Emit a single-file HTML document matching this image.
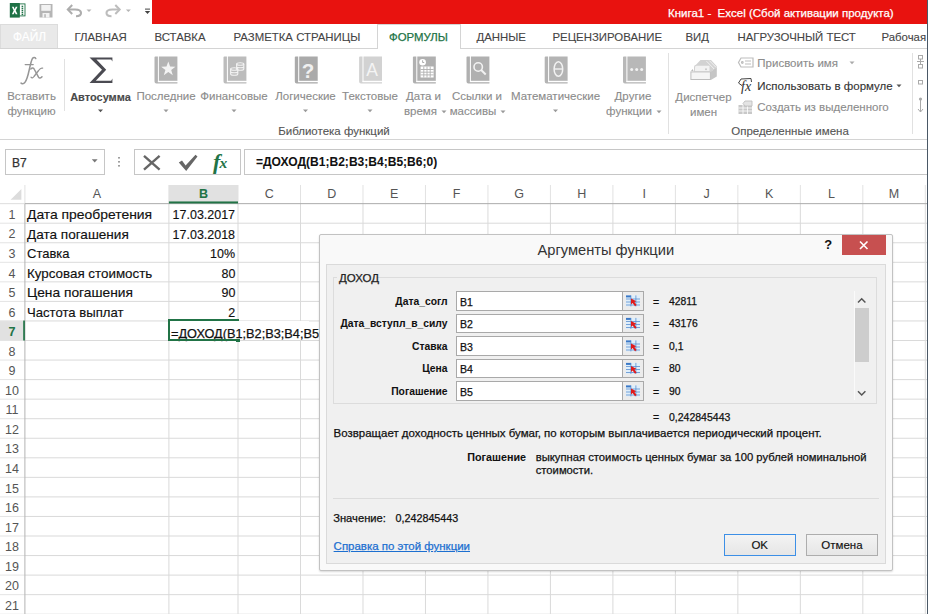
<!DOCTYPE html>
<html><head><meta charset="utf-8">
<style>
*{margin:0;padding:0;box-sizing:border-box}
html,body{width:928px;height:614px;overflow:hidden;background:#fff;font-family:"Liberation Sans",sans-serif;color:#222}
.a{position:absolute}
.t{position:absolute;white-space:nowrap;line-height:1;-webkit-text-stroke:0.25px currentColor}
svg{position:absolute;overflow:visible}
</style></head><body>
<div class="a" style="left:152px;top:0px;width:776px;height:24px;background:#e8120f"></div>
<div class="t" style="left:668px;top:7.5px;font-size:11.5px;color:#fff">Книга1 -&nbsp; Excel (Сбой активации продукта)</div>
<svg style="left:0;top:0" width="928" height="614"><rect x="19" y="3.9" width="6" height="12" fill="#fff" stroke="#1e7145" stroke-width="0.9"/><g fill="#1e7145"><rect x="21.6" y="5.7" width="1.6" height="1.4"/><rect x="21.6" y="7.7" width="1.6" height="1.4"/><rect x="21.6" y="9.7" width="1.6" height="1.4"/><rect x="21.6" y="11.7" width="1.6" height="1.4"/><rect x="21.6" y="13.7" width="1.6" height="1.4"/></g><rect x="9.8" y="3" width="10" height="14.6" fill="#1e7145"/><path d="M11.9,6.8 L13.7,6.8 L14.7,9.2 L15.7,6.8 L17.5,6.8 L15.7,10.5 L17.5,14.3 L15.7,14.3 L14.7,11.9 L13.7,14.3 L11.9,14.3 L13.7,10.5 Z" fill="#fff"/><path d="M39.5,4 L52.5,4 L52.5,17.5 L39.5,17.5 Z" fill="#b5b5b5"/><rect x="41.3" y="5" width="9.4" height="5.8" fill="#f2f2f2"/><rect x="42.5" y="13" width="7" height="4.5" fill="#f2f2f2"/><rect x="44.3" y="14.2" width="1.5" height="3.3" fill="#b5b5b5"/><path d="M72.2,5 L67.8,9.5 L72.2,14" fill="none" stroke="#adadad" stroke-width="2"/><path d="M68.5,9.5 L75,9.5 C79,9.5 81,11.3 81,13 C81,15 79,16.2 76,16.2" fill="none" stroke="#adadad" stroke-width="2.1"/><polygon points="86.5,9.5 91.5,9.5 89,12" fill="#b5b5b5"/><path d="M115.3,5 L119.7,9.5 L115.3,14" fill="none" stroke="#bdbdbd" stroke-width="2"/><path d="M119,9.5 L112.5,9.5 C108.5,9.5 106.5,11.3 106.5,13 C106.5,15 108.5,16.2 111.5,16.2" fill="none" stroke="#bdbdbd" stroke-width="2.1"/><polygon points="125.9,9.5 130.9,9.5 128.4,12" fill="#b5b5b5"/><rect x="145" y="8.6" width="5" height="1" fill="#444"/><polygon points="144.8,11 150.2,11 147.5,14" fill="#444"/></svg>
<div class="a" style="left:0px;top:48px;width:928px;height:1px;background:#d4d4d4"></div>
<div class="a" style="left:0px;top:24.3px;width:57.8px;height:24px;background:#e9e9e9;border:1px solid #dcdcdc;border-bottom:none"></div>
<div class="t" style="left:12.5px;top:29.8px;font-size:13.2px;transform:scaleX(0.9);transform-origin:0 0;color:#fff;-webkit-text-stroke:0.2px #fff">ФАЙЛ</div>
<div class="a" style="left:377px;top:24px;width:84px;height:25px;background:#fff;border:1px solid #d4d4d4;border-bottom:none"></div>
<div class="t" style="left:74.5px;top:31.5px;font-size:11.4px;color:#444;-webkit-text-stroke:0.1px #444">ГЛАВНАЯ</div>
<div class="t" style="left:154.5px;top:31.5px;font-size:11.4px;color:#444;-webkit-text-stroke:0.1px #444">ВСТАВКА</div>
<div class="t" style="left:233.5px;top:31.5px;font-size:11.4px;color:#444;-webkit-text-stroke:0.1px #444">РАЗМЕТКА СТРАНИЦЫ</div>
<div class="t" style="left:476.5px;top:31.5px;font-size:11.4px;color:#444;-webkit-text-stroke:0.1px #444">ДАННЫЕ</div>
<div class="t" style="left:552.5px;top:31.5px;font-size:11.4px;color:#444;-webkit-text-stroke:0.1px #444">РЕЦЕНЗИРОВАНИЕ</div>
<div class="t" style="left:685.5px;top:31.5px;font-size:11.4px;color:#444;-webkit-text-stroke:0.1px #444">ВИД</div>
<div class="t" style="left:737.5px;top:31.5px;font-size:11.4px;color:#444;-webkit-text-stroke:0.1px #444">НАГРУЗОЧНЫЙ ТЕСТ</div>
<div class="t" style="left:881.5px;top:31.5px;font-size:11.4px;color:#444;-webkit-text-stroke:0.1px #444">Рабочая</div>
<div class="t" style="left:389px;top:31.5px;font-size:11.4px;color:#217346">ФОРМУЛЫ</div>
<div class="a" style="left:0px;top:139px;width:928px;height:1px;background:#d4d4d4"></div>
<div class="t" style="left:-48.5px;width:160px;text-align:center;top:91.46px;font-size:11.5px;color:#8c8c8c;-webkit-text-stroke:0.12px currentColor">Вставить</div>
<div class="t" style="left:-48.5px;width:160px;text-align:center;top:106.46px;font-size:11.5px;color:#8c8c8c;-webkit-text-stroke:0.12px currentColor">функцию</div>
<div class="a" style="left:64px;top:59px;width:1px;height:52px;background:#e1e1e1"></div>
<div class="t" style="left:20.5px;width:160px;text-align:center;top:91.70px;font-size:11px;color:#4a4a4a;font-weight:bold;-webkit-text-stroke:0.05px currentColor;-webkit-text-stroke:0.12px currentColor">Автосумма</div>
<svg style="left:0;top:0" width="1" height="1"><polygon points="98.0,109.5 103.0,109.5 100.5,112.2" fill="#555"/></svg>
<div class="t" style="left:86px;width:160px;text-align:center;top:91.46px;font-size:11.5px;color:#8c8c8c;-webkit-text-stroke:0.12px currentColor">Последние</div>
<svg style="left:0;top:0" width="1" height="1"><polygon points="163.5,109.5 168.5,109.5 166,112.2" fill="#9a9a9a"/></svg>
<div class="t" style="left:154px;width:160px;text-align:center;top:91.46px;font-size:11.5px;color:#8c8c8c;-webkit-text-stroke:0.12px currentColor">Финансовые</div>
<svg style="left:0;top:0" width="1" height="1"><polygon points="231.5,109.5 236.5,109.5 234,112.2" fill="#9a9a9a"/></svg>
<div class="t" style="left:225.5px;width:160px;text-align:center;top:91.46px;font-size:11.5px;color:#8c8c8c;-webkit-text-stroke:0.12px currentColor">Логические</div>
<svg style="left:0;top:0" width="1" height="1"><polygon points="303.0,109.5 308.0,109.5 305.5,112.2" fill="#9a9a9a"/></svg>
<div class="t" style="left:290px;width:160px;text-align:center;top:91.46px;font-size:11.5px;color:#8c8c8c;-webkit-text-stroke:0.12px currentColor">Текстовые</div>
<svg style="left:0;top:0" width="1" height="1"><polygon points="367.5,109.5 372.5,109.5 370,112.2" fill="#9a9a9a"/></svg>
<div class="t" style="left:343.5px;width:160px;text-align:center;top:91.46px;font-size:11.5px;color:#8c8c8c;-webkit-text-stroke:0.12px currentColor">Дата и</div>
<div class="t" style="left:340.5px;width:160px;text-align:center;top:106.46px;font-size:11.5px;color:#8c8c8c;-webkit-text-stroke:0.12px currentColor">время</div>
<svg style="left:0;top:0" width="1" height="1"><polygon points="441.5,110.5 446.5,110.5 444,113.2" fill="#9a9a9a"/></svg>
<div class="t" style="left:397px;width:160px;text-align:center;top:91.46px;font-size:11.5px;color:#8c8c8c;-webkit-text-stroke:0.12px currentColor">Ссылки и</div>
<div class="t" style="left:393px;width:160px;text-align:center;top:106.46px;font-size:11.5px;color:#8c8c8c;-webkit-text-stroke:0.12px currentColor">массивы</div>
<svg style="left:0;top:0" width="1" height="1"><polygon points="500.5,110.5 505.5,110.5 503,113.2" fill="#9a9a9a"/></svg>
<div class="t" style="left:475.5px;width:160px;text-align:center;top:91.46px;font-size:11.5px;color:#8c8c8c;-webkit-text-stroke:0.12px currentColor">Математические</div>
<svg style="left:0;top:0" width="1" height="1"><polygon points="553.0,109.5 558.0,109.5 555.5,112.2" fill="#9a9a9a"/></svg>
<div class="t" style="left:553px;width:160px;text-align:center;top:91.46px;font-size:11.5px;color:#8c8c8c;-webkit-text-stroke:0.12px currentColor">Другие</div>
<div class="t" style="left:549px;width:160px;text-align:center;top:106.46px;font-size:11.5px;color:#8c8c8c;-webkit-text-stroke:0.12px currentColor">функции</div>
<svg style="left:0;top:0" width="1" height="1"><polygon points="656.5,110.5 661.5,110.5 659,113.2" fill="#9a9a9a"/></svg>
<div class="t" style="left:254px;width:160px;text-align:center;top:126.46px;font-size:11.5px;color:#555;-webkit-text-stroke:0.12px currentColor">Библиотека функций</div>
<div class="a" style="left:668px;top:53px;width:1px;height:81px;background:#e1e1e1"></div>
<div class="t" style="left:623.5px;width:160px;text-align:center;top:91.86px;font-size:11.5px;color:#8c8c8c;-webkit-text-stroke:0.12px currentColor">Диспетчер</div>
<div class="t" style="left:623.5px;width:160px;text-align:center;top:106.66px;font-size:11.5px;color:#8c8c8c;-webkit-text-stroke:0.12px currentColor">имен</div>
<div class="t" style="left:757.3px;top:57.66px;font-size:11.5px;color:#8c8c8c;-webkit-text-stroke:0.12px currentColor">Присвоить имя</div>
<svg style="left:0;top:0" width="1" height="1"><polygon points="849.5,61.5 854.5,61.5 852,64.2" fill="#aaa"/></svg>
<div class="t" style="left:757.3px;top:80.76px;font-size:11.5px;color:#333;-webkit-text-stroke:0.12px currentColor">Использовать в формуле</div>
<svg style="left:0;top:0" width="1" height="1"><polygon points="896.5,84.5 901.5,84.5 899,87.2" fill="#555"/></svg>
<div class="t" style="left:757.3px;top:102.46px;font-size:11.5px;color:#8c8c8c;-webkit-text-stroke:0.12px currentColor">Создать из выделенного</div>
<div class="t" style="left:710px;width:160px;text-align:center;top:126.46px;font-size:11.5px;color:#555;-webkit-text-stroke:0.12px currentColor">Определенные имена</div>
<div class="a" style="left:912px;top:53px;width:1px;height:81px;background:#e1e1e1"></div>
<svg style="left:0;top:0" width="928" height="614"><g fill="none" stroke="#969696" stroke-linecap="round"><path d="M35.8,58.6 C35.4,57.2 33.6,57 32.6,58.3 C31.5,59.8 30.5,64 29.2,70 C27.8,76.5 26.5,80.5 24.8,82.6 C23.6,84 21.8,84.2 21,83" stroke-width="1.5"/><path d="M25.2,64.6 L33.2,64.6" stroke-width="1.3"/><path d="M30.8,69 C32.2,67.5 33.6,67.8 34.4,69.5 L38.5,77.2 C39.4,78.6 40.8,78.2 42,76.8" stroke-width="1.5"/><path d="M42.6,68.2 C41.2,67.6 40,68.5 38.6,70.5 L34,76.5 C33,78 31.8,78.2 31,77.2" stroke-width="1.3"/></g><path d="M89.5,57.4 L112.4,57.4 L112.4,61.6 L111.2,59.6 L96.4,59.6 L106.2,69.8 L95.8,80.7 L111.2,80.7 L112.4,78.6 L112.4,83 L89.5,83 L102,69.8 Z" fill="#4b4b52"/><g transform="translate(154.2,56.5)"><path d="M0.3,0.8 Q0.3,0 1.2,0 L3.7,0 L3.7,25.6 L23.2,25.6 L23.2,27 L2.2,27 Q0.3,27 0.3,25 Z" fill="#b4b4b4"/><rect x="4.7" y="0" width="18.5" height="24.4" fill="#b4b4b4"/><rect x="3.7" y="24.4" width="19.5" height="1.3" fill="#fff"/><path d="M14.1,4.9 L15.9,10.1 L21.2,10.2 L17,13.5 L18.6,18.7 L14.1,15.6 L9.6,18.7 L11.2,13.5 L7,10.2 L12.3,10.1 Z" fill="#f4f4f4"/></g><g transform="translate(223.2,56.5)"><path d="M0.3,0.8 Q0.3,0 1.2,0 L3.7,0 L3.7,25.6 L23.2,25.6 L23.2,27 L2.2,27 Q0.3,27 0.3,25 Z" fill="#bcbcbc"/><rect x="4.7" y="0" width="18.5" height="24.4" fill="#bcbcbc"/><rect x="3.7" y="24.4" width="19.5" height="1.3" fill="#fff"/><g fill="none" stroke="#f2f2f2" stroke-width="1.1"><ellipse cx="17" cy="7.5" rx="3.6" ry="1.3"/><path d="M13.4,7.5 v5 a3.6,1.3 0 0 0 7.2,0 v-5 M13.4,10 a3.6,1.3 0 0 0 7.2,0"/><ellipse cx="11" cy="12.5" rx="3.6" ry="1.3"/><path d="M7.4,12.5 v5 a3.6,1.3 0 0 0 7.2,0 v-5 M7.4,15 a3.6,1.3 0 0 0 7.2,0"/></g></g><g transform="translate(294.5,56.5)"><path d="M0.3,0.8 Q0.3,0 1.2,0 L3.7,0 L3.7,25.6 L23.2,25.6 L23.2,27 L2.2,27 Q0.3,27 0.3,25 Z" fill="#aaaaaa"/><rect x="4.7" y="0" width="18.5" height="24.4" fill="#aaaaaa"/><rect x="3.7" y="24.4" width="19.5" height="1.3" fill="#fff"/><text x="13.6" y="21" text-anchor="middle" font-family="Liberation Sans" font-weight="bold" font-size="20.5" fill="#f0f0f0">?</text></g><g transform="translate(358.8,56.5)"><path d="M0.3,0.8 Q0.3,0 1.2,0 L3.7,0 L3.7,25.6 L23.2,25.6 L23.2,27 L2.2,27 Q0.3,27 0.3,25 Z" fill="#d2d2d2"/><rect x="4.7" y="0" width="18.5" height="24.4" fill="#d2d2d2"/><rect x="3.7" y="24.4" width="19.5" height="1.3" fill="#fff"/><text x="13.2" y="19.6" text-anchor="middle" font-family="Liberation Sans" font-size="17.5" fill="#f4f4f4">A</text></g><g transform="translate(412.6,56.5)"><path d="M0.3,0.8 Q0.3,0 1.2,0 L3.7,0 L3.7,25.6 L23.2,25.6 L23.2,27 L2.2,27 Q0.3,27 0.3,25 Z" fill="#b0b0b0"/><rect x="4.7" y="0" width="18.5" height="24.4" fill="#b0b0b0"/><rect x="3.7" y="24.4" width="19.5" height="1.3" fill="#fff"/><circle cx="10" cy="5.8" r="3.3" fill="#fff"/><path d="M10,3.8 v2.2 h1.6" stroke="#999" stroke-width="0.8" fill="none"/><g fill="#fff"><rect x="8" y="10" width="13" height="11"/></g><g stroke="#b0b0b0" stroke-width="0.9"><path d="M8,13 h13 M8,15.7 h13 M8,18.4 h13 M11.2,10 v11 M14.4,10 v11 M17.6,10 v11"/></g></g><g transform="translate(466.2,56.5)"><path d="M0.3,0.8 Q0.3,0 1.2,0 L3.7,0 L3.7,25.6 L23.2,25.6 L23.2,27 L2.2,27 Q0.3,27 0.3,25 Z" fill="#b0b0b0"/><rect x="4.7" y="0" width="18.5" height="24.4" fill="#b0b0b0"/><rect x="3.7" y="24.4" width="19.5" height="1.3" fill="#fff"/><circle cx="12" cy="10.5" r="4.2" fill="none" stroke="#f2f2f2" stroke-width="1.6"/><path d="M15,13.5 L19.5,18" stroke="#f2f2f2" stroke-width="2"/></g><g transform="translate(544.4,56.5)"><path d="M0.3,0.8 Q0.3,0 1.2,0 L3.7,0 L3.7,25.6 L23.2,25.6 L23.2,27 L2.2,27 Q0.3,27 0.3,25 Z" fill="#b4b4b4"/><rect x="4.7" y="0" width="18.5" height="24.4" fill="#b4b4b4"/><rect x="3.7" y="24.4" width="19.5" height="1.3" fill="#fff"/><ellipse cx="14" cy="12.5" rx="4.3" ry="7.3" fill="none" stroke="#f2f2f2" stroke-width="1.5"/><path d="M9.7,12.5 h8.6" stroke="#f2f2f2" stroke-width="1.4"/></g><g transform="translate(622.7,56.5)"><path d="M0.3,0.8 Q0.3,0 1.2,0 L3.7,0 L3.7,25.6 L23.2,25.6 L23.2,27 L2.2,27 Q0.3,27 0.3,25 Z" fill="#b8b8b8"/><rect x="4.7" y="0" width="18.5" height="24.4" fill="#b8b8b8"/><rect x="3.7" y="24.4" width="19.5" height="1.3" fill="#fff"/><g fill="#f2f2f2"><circle cx="9" cy="13" r="1.5"/><circle cx="14" cy="13" r="1.5"/><circle cx="19" cy="13" r="1.5"/></g></g><path d="M694,71.5 L694,67 Q694,65 696,64.8 L700.5,60 L711,60 L716.8,66.2 L716.8,67.5 L711,71.5 Z" fill="#d2d2d2"/><path d="M695,71.5 L695,67.3 Q695,65.8 696.6,65.8 L709.5,65.8 L709.5,71.5 Z" fill="#f2f2f2"/><circle cx="706" cy="69.3" r="1" fill="#c8c8c8"/><path d="M706.5,61.2 L714.2,69 M709.3,60.6 L716.2,67.5" stroke="#f4f4f4" stroke-width="0.9"/><rect x="690.9" y="71.9" width="19.5" height="7.6" fill="#f5f5f5" stroke="#bdbdbd" stroke-width="1"/><path d="M710.9,71.4 L716.8,67.2 L716.8,76.5 L710.9,80 Z" fill="#c6c6c6"/><path d="M691,71 L692.6,69 L693.5,71 Z" fill="#bbb"/><g fill="none" stroke="#bdbdbd" stroke-width="1.2"><path d="M741,58 L753,58 L753,67 L741,67 L738.5,62.5 Z"/><path d="M745,61 h6 M745,64 h6"/><circle cx="742.3" cy="62.5" r="0.8"/></g><path d="M741,79 L751,78.5 L751.5,82 M741,79 L738.5,83 L742.5,86" fill="none" stroke="#444" stroke-width="1"/><text x="741" y="91" font-family="Liberation Serif" font-style="italic" font-size="14" fill="#333">fx</text><g fill="#c8c8c8"><rect x="738.5" y="105" width="13.5" height="9"/></g><g stroke="#fff" stroke-width="0.8"><path d="M738.5,108 h13.5 M738.5,111 h13.5 M743,105 v9 M747.5,105 v9"/></g><path d="M745,101 L752,101 L752,106 L745,106 L743,103.5 Z" fill="#e4e4e4" stroke="#c0c0c0" stroke-width="0.9"/><g fill="none" stroke="#aaa" stroke-width="1"><rect x="918.5" y="55.5" width="4" height="3.5"/><rect x="918.5" y="64.5" width="4" height="3.5"/><path d="M917,61.5 h7 M920.5,59 v5"/><rect x="918.5" y="80.5" width="4" height="3.5"/><path d="M920.5,99 v13 M918,109 l2.5,3 l2.5,-3"/></g><circle cx="920.5" cy="99" r="1.6" fill="#aaa"/></svg>
<div class="a" style="left:5px;top:149px;width:100px;height:26px;border:1px solid #c6c6c6;background:#fff"></div>
<div class="t" style="left:12px;top:156.6px;font-size:12px;color:#333">B7</div>
<div class="a" style="left:134px;top:149px;width:107px;height:26px;border:1px solid #c6c6c6;background:#fff"></div>
<div class="a" style="left:244px;top:149px;width:690px;height:26px;border:1px solid #c6c6c6;background:#fff"></div>
<div class="t" style="left:256px;top:156px;font-size:12.06px;font-weight:bold;-webkit-text-stroke:0.05px currentColor;color:#111">=ДОХОД(B1;B2;B3;B4;B5;B6;0)</div>
<svg style="left:0;top:0" width="928" height="614"><polygon points="91.8,159.3 97.6,159.3 94.7,162.6" fill="#777"/><g fill="#888"><rect x="118.2" y="157" width="1.6" height="1.6"/><rect x="118.2" y="161" width="1.6" height="1.6"/><rect x="118.2" y="165" width="1.6" height="1.6"/></g><path d="M144,155.8 L159.6,169.6 M159.6,155.8 L144,169.6" stroke="#666" stroke-width="2.4"/><path d="M178.8,162.6 L182,160.5 L185.6,165.5 L195.5,154.8 L197.5,156.5 L186.2,171 Z" fill="#666"/><text x="213" y="168.5" font-family="Liberation Serif" font-style="italic" font-weight="bold" font-size="22" fill="#217346">f</text><text x="219.5" y="168" font-family="Liberation Serif" font-style="italic" font-weight="bold" font-size="15.5" fill="#217346">x</text></svg>
<svg style="left:0;top:0" width="928" height="614"><rect x="0" y="320.65" width="24.9" height="19.55" fill="#e1e1e1"/><rect x="168.9" y="185" width="69.1" height="18.650000000000006" fill="#e1e1e1"/><rect x="24.40" y="185" width="1" height="18.65" fill="#e2e2e2"/><rect x="168.40" y="185" width="1" height="18.65" fill="#e2e2e2"/><rect x="237.50" y="185" width="1" height="18.65" fill="#e2e2e2"/><rect x="300.00" y="185" width="1" height="18.65" fill="#e2e2e2"/><rect x="362.48" y="185" width="1" height="18.65" fill="#e2e2e2"/><rect x="424.96" y="185" width="1" height="18.65" fill="#e2e2e2"/><rect x="487.44" y="185" width="1" height="18.65" fill="#e2e2e2"/><rect x="549.92" y="185" width="1" height="18.65" fill="#e2e2e2"/><rect x="612.40" y="185" width="1" height="18.65" fill="#e2e2e2"/><rect x="674.88" y="185" width="1" height="18.65" fill="#e2e2e2"/><rect x="737.36" y="185" width="1" height="18.65" fill="#e2e2e2"/><rect x="799.84" y="185" width="1" height="18.65" fill="#e2e2e2"/><rect x="862.32" y="185" width="1" height="18.65" fill="#e2e2e2"/><rect x="924.80" y="185" width="1" height="18.65" fill="#e2e2e2"/><rect x="25" y="222.70" width="903" height="1" fill="#dadada"/><rect x="0" y="222.70" width="25" height="1" fill="#e4e4e4"/><rect x="25" y="242.25" width="903" height="1" fill="#dadada"/><rect x="0" y="242.25" width="25" height="1" fill="#e4e4e4"/><rect x="25" y="261.80" width="903" height="1" fill="#dadada"/><rect x="0" y="261.80" width="25" height="1" fill="#e4e4e4"/><rect x="25" y="281.35" width="903" height="1" fill="#dadada"/><rect x="0" y="281.35" width="25" height="1" fill="#e4e4e4"/><rect x="25" y="300.90" width="903" height="1" fill="#dadada"/><rect x="0" y="300.90" width="25" height="1" fill="#e4e4e4"/><rect x="25" y="320.45" width="903" height="1" fill="#dadada"/><rect x="0" y="320.45" width="25" height="1" fill="#e4e4e4"/><rect x="25" y="340.00" width="903" height="1" fill="#dadada"/><rect x="0" y="340.00" width="25" height="1" fill="#e4e4e4"/><rect x="25" y="359.55" width="903" height="1" fill="#dadada"/><rect x="0" y="359.55" width="25" height="1" fill="#e4e4e4"/><rect x="25" y="379.10" width="903" height="1" fill="#dadada"/><rect x="0" y="379.10" width="25" height="1" fill="#e4e4e4"/><rect x="25" y="398.65" width="903" height="1" fill="#dadada"/><rect x="0" y="398.65" width="25" height="1" fill="#e4e4e4"/><rect x="25" y="418.20" width="903" height="1" fill="#dadada"/><rect x="0" y="418.20" width="25" height="1" fill="#e4e4e4"/><rect x="25" y="437.75" width="903" height="1" fill="#dadada"/><rect x="0" y="437.75" width="25" height="1" fill="#e4e4e4"/><rect x="25" y="457.30" width="903" height="1" fill="#dadada"/><rect x="0" y="457.30" width="25" height="1" fill="#e4e4e4"/><rect x="25" y="476.85" width="903" height="1" fill="#dadada"/><rect x="0" y="476.85" width="25" height="1" fill="#e4e4e4"/><rect x="25" y="496.40" width="903" height="1" fill="#dadada"/><rect x="0" y="496.40" width="25" height="1" fill="#e4e4e4"/><rect x="25" y="515.95" width="903" height="1" fill="#dadada"/><rect x="0" y="515.95" width="25" height="1" fill="#e4e4e4"/><rect x="25" y="535.50" width="903" height="1" fill="#dadada"/><rect x="0" y="535.50" width="25" height="1" fill="#e4e4e4"/><rect x="25" y="555.05" width="903" height="1" fill="#dadada"/><rect x="0" y="555.05" width="25" height="1" fill="#e4e4e4"/><rect x="25" y="574.60" width="903" height="1" fill="#dadada"/><rect x="0" y="574.60" width="25" height="1" fill="#e4e4e4"/><rect x="25" y="594.15" width="903" height="1" fill="#dadada"/><rect x="0" y="594.15" width="25" height="1" fill="#e4e4e4"/><rect x="25" y="613.70" width="903" height="1" fill="#dadada"/><rect x="0" y="613.70" width="25" height="1" fill="#e4e4e4"/><rect x="168.40" y="203.65" width="1" height="410.35" fill="#dadada"/><rect x="237.50" y="203.65" width="1" height="410.35" fill="#dadada"/><rect x="300.00" y="203.65" width="1" height="410.35" fill="#dadada"/><rect x="362.48" y="203.65" width="1" height="410.35" fill="#dadada"/><rect x="424.96" y="203.65" width="1" height="410.35" fill="#dadada"/><rect x="487.44" y="203.65" width="1" height="410.35" fill="#dadada"/><rect x="549.92" y="203.65" width="1" height="410.35" fill="#dadada"/><rect x="612.40" y="203.65" width="1" height="410.35" fill="#dadada"/><rect x="674.88" y="203.65" width="1" height="410.35" fill="#dadada"/><rect x="737.36" y="203.65" width="1" height="410.35" fill="#dadada"/><rect x="799.84" y="203.65" width="1" height="410.35" fill="#dadada"/><rect x="862.32" y="203.65" width="1" height="410.35" fill="#dadada"/><rect x="924.80" y="203.65" width="1" height="410.35" fill="#dadada"/><rect x="0" y="203.15" width="25" height="1" fill="#dedede"/><rect x="25" y="203.15" width="903" height="1" fill="#ababab"/><rect x="24.40" y="203.65" width="1" height="410.35" fill="#b4b4b4"/><rect x="168.9" y="201.45" width="69.1" height="2" fill="#217346"/><rect x="23.20" y="320.55" width="1.7" height="19.95" fill="#217346"/><polygon points="21.4,189 21.4,199.8 10.6,199.8" fill="#dcdcdc"/><rect x="927" y="0" width="1" height="614" fill="#4a5866"/></svg>
<div class="t" style="left:76.90px;width:40px;text-align:center;top:187.8px;font-size:12.5px;-webkit-text-stroke:0;color:#555">A</div>
<div class="t" style="left:183.45px;width:40px;text-align:center;top:187.8px;font-size:12.5px;-webkit-text-stroke:0;color:#217346;font-weight:bold;-webkit-text-stroke:0.05px currentColor">B</div>
<div class="t" style="left:249.25px;width:40px;text-align:center;top:187.8px;font-size:12.5px;-webkit-text-stroke:0;color:#555">C</div>
<div class="t" style="left:311.74px;width:40px;text-align:center;top:187.8px;font-size:12.5px;-webkit-text-stroke:0;color:#555">D</div>
<div class="t" style="left:374.22px;width:40px;text-align:center;top:187.8px;font-size:12.5px;-webkit-text-stroke:0;color:#555">E</div>
<div class="t" style="left:436.70px;width:40px;text-align:center;top:187.8px;font-size:12.5px;-webkit-text-stroke:0;color:#555">F</div>
<div class="t" style="left:499.18px;width:40px;text-align:center;top:187.8px;font-size:12.5px;-webkit-text-stroke:0;color:#555">G</div>
<div class="t" style="left:561.66px;width:40px;text-align:center;top:187.8px;font-size:12.5px;-webkit-text-stroke:0;color:#555">H</div>
<div class="t" style="left:624.14px;width:40px;text-align:center;top:187.8px;font-size:12.5px;-webkit-text-stroke:0;color:#555">I</div>
<div class="t" style="left:686.62px;width:40px;text-align:center;top:187.8px;font-size:12.5px;-webkit-text-stroke:0;color:#555">J</div>
<div class="t" style="left:749.10px;width:40px;text-align:center;top:187.8px;font-size:12.5px;-webkit-text-stroke:0;color:#555">K</div>
<div class="t" style="left:811.58px;width:40px;text-align:center;top:187.8px;font-size:12.5px;-webkit-text-stroke:0;color:#555">L</div>
<div class="t" style="left:874.06px;width:40px;text-align:center;top:187.8px;font-size:12.5px;-webkit-text-stroke:0;color:#555">M</div>
<div class="t" style="left:0;width:24px;text-align:center;top:208.85px;font-size:12.5px;-webkit-text-stroke:0;color:#555">1</div>
<div class="t" style="left:0;width:24px;text-align:center;top:228.40px;font-size:12.5px;-webkit-text-stroke:0;color:#555">2</div>
<div class="t" style="left:0;width:24px;text-align:center;top:247.95px;font-size:12.5px;-webkit-text-stroke:0;color:#555">3</div>
<div class="t" style="left:0;width:24px;text-align:center;top:267.50px;font-size:12.5px;-webkit-text-stroke:0;color:#555">4</div>
<div class="t" style="left:0;width:24px;text-align:center;top:287.05px;font-size:12.5px;-webkit-text-stroke:0;color:#555">5</div>
<div class="t" style="left:0;width:24px;text-align:center;top:306.60px;font-size:12.5px;-webkit-text-stroke:0;color:#555">6</div>
<div class="t" style="left:0;width:24px;text-align:center;top:326.15px;font-size:12.5px;-webkit-text-stroke:0;color:#217346;font-weight:bold;-webkit-text-stroke:0.05px currentColor">7</div>
<div class="t" style="left:0;width:24px;text-align:center;top:345.70px;font-size:12.5px;-webkit-text-stroke:0;color:#555">8</div>
<div class="t" style="left:0;width:24px;text-align:center;top:365.25px;font-size:12.5px;-webkit-text-stroke:0;color:#555">9</div>
<div class="t" style="left:0;width:24px;text-align:center;top:384.80px;font-size:12.5px;-webkit-text-stroke:0;color:#555">10</div>
<div class="t" style="left:0;width:24px;text-align:center;top:404.35px;font-size:12.5px;-webkit-text-stroke:0;color:#555">11</div>
<div class="t" style="left:0;width:24px;text-align:center;top:423.90px;font-size:12.5px;-webkit-text-stroke:0;color:#555">12</div>
<div class="t" style="left:0;width:24px;text-align:center;top:443.45px;font-size:12.5px;-webkit-text-stroke:0;color:#555">13</div>
<div class="t" style="left:0;width:24px;text-align:center;top:463.00px;font-size:12.5px;-webkit-text-stroke:0;color:#555">14</div>
<div class="t" style="left:0;width:24px;text-align:center;top:482.55px;font-size:12.5px;-webkit-text-stroke:0;color:#555">15</div>
<div class="t" style="left:0;width:24px;text-align:center;top:502.10px;font-size:12.5px;-webkit-text-stroke:0;color:#555">16</div>
<div class="t" style="left:0;width:24px;text-align:center;top:521.65px;font-size:12.5px;-webkit-text-stroke:0;color:#555">17</div>
<div class="t" style="left:0;width:24px;text-align:center;top:541.20px;font-size:12.5px;-webkit-text-stroke:0;color:#555">18</div>
<div class="t" style="left:0;width:24px;text-align:center;top:560.75px;font-size:12.5px;-webkit-text-stroke:0;color:#555">19</div>
<div class="t" style="left:0;width:24px;text-align:center;top:580.30px;font-size:12.5px;-webkit-text-stroke:0;color:#555">20</div>
<div class="t" style="left:0;width:24px;text-align:center;top:599.85px;font-size:12.5px;-webkit-text-stroke:0;color:#555">21</div>
<div class="t" style="left:27px;top:208.25px;font-size:13px;transform:scaleX(1.068);transform-origin:0 0;color:#111;-webkit-text-stroke:0.15px #111">Дата преобретения</div>
<div class="t" style="right:692.5px;top:208.25px;font-size:13px;transform:scaleX(0.96);transform-origin:100% 0;color:#111;-webkit-text-stroke:0.15px #111">17.03.2017</div>
<div class="t" style="left:27px;top:227.8px;font-size:13px;transform:scaleX(1.044);transform-origin:0 0;color:#111;-webkit-text-stroke:0.15px #111">Дата погашения</div>
<div class="t" style="right:692.5px;top:227.8px;font-size:13px;transform:scaleX(0.96);transform-origin:100% 0;color:#111;-webkit-text-stroke:0.15px #111">17.03.2018</div>
<div class="t" style="left:27px;top:247.35px;font-size:13px;transform:scaleX(1.0);transform-origin:0 0;color:#111;-webkit-text-stroke:0.15px #111">Ставка</div>
<div class="t" style="right:692.5px;top:247.35px;font-size:13px;transform:scaleX(0.96);transform-origin:100% 0;color:#111;-webkit-text-stroke:0.15px #111">10%</div>
<div class="t" style="left:27px;top:266.90000000000003px;font-size:13px;transform:scaleX(1.028);transform-origin:0 0;color:#111;-webkit-text-stroke:0.15px #111">Курсовая стоимость</div>
<div class="t" style="right:692.5px;top:266.90000000000003px;font-size:13px;transform:scaleX(0.96);transform-origin:100% 0;color:#111;-webkit-text-stroke:0.15px #111">80</div>
<div class="t" style="left:27px;top:286.45000000000005px;font-size:13px;transform:scaleX(1.06);transform-origin:0 0;color:#111;-webkit-text-stroke:0.15px #111">Цена погашения</div>
<div class="t" style="right:692.5px;top:286.45000000000005px;font-size:13px;transform:scaleX(0.96);transform-origin:100% 0;color:#111;-webkit-text-stroke:0.15px #111">90</div>
<div class="t" style="left:27px;top:306.0px;font-size:13px;transform:scaleX(1.01);transform-origin:0 0;color:#111;-webkit-text-stroke:0.15px #111">Частота выплат</div>
<div class="t" style="right:692.5px;top:306.0px;font-size:13px;transform:scaleX(0.96);transform-origin:100% 0;color:#111;-webkit-text-stroke:0.15px #111">2</div>
<div class="a" style="left:168.5px;top:321px;width:140px;height:18.5px;background:#fff"></div>
<div class="t" style="left:171px;top:326.95000000000005px;font-size:13px;transform:scaleX(0.98);transform-origin:0 0;color:#111">=ДОХОД(B1;B2;B3;B4;B5;B6;0)</div>
<div class="a" style="left:167.5px;top:319.3px;width:71.3px;height:2px;background:#217346"></div>
<div class="a" style="left:167.5px;top:339.1px;width:68px;height:2px;background:#217346"></div>
<div class="a" style="left:167.5px;top:319.3px;width:2px;height:21.8px;background:#217346"></div>
<div class="a" style="left:235.5px;top:338.8px;width:4.5px;height:3.5px;background:#217346"></div>
<div class="a" style="left:319px;top:234px;width:574px;height:337.29999999999995px;background:#f9f9f9;border:1px solid #c2c2c2;border-radius:2px;box-shadow:0px 1px 2px rgba(0,0,0,0.15)"></div>
<div class="t" style="left:537.5px;top:242.776275px;font-size:14.67px;color:#333;-webkit-text-stroke:0">Аргументы функции</div>
<div class="t" style="left:824.2px;top:239.3px;font-size:12.9px;font-weight:bold;-webkit-text-stroke:0.05px currentColor;color:#111">?</div>
<div class="a" style="left:842px;top:235.3px;width:43.7px;height:19.4px;background:#c75050"></div>
<svg style="left:0;top:0" width="928" height="614"><path d="M860,241.5 L867.5,249 M867.5,241.5 L860,249" stroke="#fff" stroke-width="1.6"/></svg>
<div class="a" style="left:326.3px;top:264px;width:559.5px;height:300.3px;background:#f0f0f0;border:1px solid #dadada"></div>
<div class="a" style="left:333px;top:276.8px;width:544px;height:127.5px;border:1px solid #dcdcdc"></div>
<div class="a" style="left:337px;top:272px;width:40px;height:10px;background:#f0f0f0"></div>
<div class="t" style="left:339px;top:273.46px;font-size:11.5px;color:#222">ДОХОД</div>
<div class="t" style="right:480.5px;top:296.74px;font-size:10.3px;font-weight:bold;-webkit-text-stroke:0.05px currentColor;color:#111">Дата_согл</div>
<div class="a" style="left:456px;top:291.4px;width:187.5px;height:19.2px;background:#fff;border:1px solid #a9a9a9"></div>
<div class="t" style="left:460px;top:296.64px;font-size:10.5px;color:#111">B1</div>
<div class="a" style="left:622px;top:291.4px;width:21.5px;height:19.2px;background:#ececec;border:1px solid #a9a9a9"></div>
<div class="t" style="left:653px;top:296.64px;font-size:10.5px;color:#111">=</div>
<div class="t" style="left:669px;top:296.71px;font-size:10.35px;color:#111">42811</div>
<div class="t" style="right:480.5px;top:319.24px;font-size:10.3px;font-weight:bold;-webkit-text-stroke:0.05px currentColor;color:#111">Дата_вступл_в_силу</div>
<div class="a" style="left:456px;top:313.9px;width:187.5px;height:19.2px;background:#fff;border:1px solid #a9a9a9"></div>
<div class="t" style="left:460px;top:319.14px;font-size:10.5px;color:#111">B2</div>
<div class="a" style="left:622px;top:313.9px;width:21.5px;height:19.2px;background:#ececec;border:1px solid #a9a9a9"></div>
<div class="t" style="left:653px;top:319.14px;font-size:10.5px;color:#111">=</div>
<div class="t" style="left:669px;top:319.21px;font-size:10.35px;color:#111">43176</div>
<div class="t" style="right:480.5px;top:341.74px;font-size:10.3px;font-weight:bold;-webkit-text-stroke:0.05px currentColor;color:#111">Ставка</div>
<div class="a" style="left:456px;top:336.4px;width:187.5px;height:19.2px;background:#fff;border:1px solid #a9a9a9"></div>
<div class="t" style="left:460px;top:341.64px;font-size:10.5px;color:#111">B3</div>
<div class="a" style="left:622px;top:336.4px;width:21.5px;height:19.2px;background:#ececec;border:1px solid #a9a9a9"></div>
<div class="t" style="left:653px;top:341.64px;font-size:10.5px;color:#111">=</div>
<div class="t" style="left:669px;top:341.71px;font-size:10.35px;color:#111">0,1</div>
<div class="t" style="right:480.5px;top:364.24px;font-size:10.3px;font-weight:bold;-webkit-text-stroke:0.05px currentColor;color:#111">Цена</div>
<div class="a" style="left:456px;top:358.9px;width:187.5px;height:19.2px;background:#fff;border:1px solid #a9a9a9"></div>
<div class="t" style="left:460px;top:364.14px;font-size:10.5px;color:#111">B4</div>
<div class="a" style="left:622px;top:358.9px;width:21.5px;height:19.2px;background:#ececec;border:1px solid #a9a9a9"></div>
<div class="t" style="left:653px;top:364.14px;font-size:10.5px;color:#111">=</div>
<div class="t" style="left:669px;top:364.21px;font-size:10.35px;color:#111">80</div>
<div class="t" style="right:480.5px;top:386.74px;font-size:10.3px;font-weight:bold;-webkit-text-stroke:0.05px currentColor;color:#111">Погашение</div>
<div class="a" style="left:456px;top:381.4px;width:187.5px;height:19.2px;background:#fff;border:1px solid #a9a9a9"></div>
<div class="t" style="left:460px;top:386.64px;font-size:10.5px;color:#111">B5</div>
<div class="a" style="left:622px;top:381.4px;width:21.5px;height:19.2px;background:#ececec;border:1px solid #a9a9a9"></div>
<div class="t" style="left:653px;top:386.64px;font-size:10.5px;color:#111">=</div>
<div class="t" style="left:669px;top:386.71px;font-size:10.35px;color:#111">90</div>
<svg style="left:0;top:0" width="928" height="614"><g transform="translate(626,295.4)"><rect x="0" y="0" width="14" height="11" fill="#dfeefa"/><rect x="0" y="0" width="5" height="2" fill="#3a78c6"/><g fill="#5a8ed0"><rect x="0" y="3.2" width="14" height="0.8"/><rect x="0" y="6.2" width="14" height="0.8"/><rect x="0" y="9.2" width="14" height="0.8"/><rect x="4.5" y="0" width="0.8" height="11"/><rect x="9.5" y="0" width="0.8" height="11"/></g><path d="M5,3 L5,9 L6.6,7.6 L9,10.8 L10.6,9.6 L8.4,6.6 L10.4,5.8 Z" fill="#e01b1b"/></g><g transform="translate(626,317.9)"><rect x="0" y="0" width="14" height="11" fill="#dfeefa"/><rect x="0" y="0" width="5" height="2" fill="#3a78c6"/><g fill="#5a8ed0"><rect x="0" y="3.2" width="14" height="0.8"/><rect x="0" y="6.2" width="14" height="0.8"/><rect x="0" y="9.2" width="14" height="0.8"/><rect x="4.5" y="0" width="0.8" height="11"/><rect x="9.5" y="0" width="0.8" height="11"/></g><path d="M5,3 L5,9 L6.6,7.6 L9,10.8 L10.6,9.6 L8.4,6.6 L10.4,5.8 Z" fill="#e01b1b"/></g><g transform="translate(626,340.4)"><rect x="0" y="0" width="14" height="11" fill="#dfeefa"/><rect x="0" y="0" width="5" height="2" fill="#3a78c6"/><g fill="#5a8ed0"><rect x="0" y="3.2" width="14" height="0.8"/><rect x="0" y="6.2" width="14" height="0.8"/><rect x="0" y="9.2" width="14" height="0.8"/><rect x="4.5" y="0" width="0.8" height="11"/><rect x="9.5" y="0" width="0.8" height="11"/></g><path d="M5,3 L5,9 L6.6,7.6 L9,10.8 L10.6,9.6 L8.4,6.6 L10.4,5.8 Z" fill="#e01b1b"/></g><g transform="translate(626,362.9)"><rect x="0" y="0" width="14" height="11" fill="#dfeefa"/><rect x="0" y="0" width="5" height="2" fill="#3a78c6"/><g fill="#5a8ed0"><rect x="0" y="3.2" width="14" height="0.8"/><rect x="0" y="6.2" width="14" height="0.8"/><rect x="0" y="9.2" width="14" height="0.8"/><rect x="4.5" y="0" width="0.8" height="11"/><rect x="9.5" y="0" width="0.8" height="11"/></g><path d="M5,3 L5,9 L6.6,7.6 L9,10.8 L10.6,9.6 L8.4,6.6 L10.4,5.8 Z" fill="#e01b1b"/></g><g transform="translate(626,385.4)"><rect x="0" y="0" width="14" height="11" fill="#dfeefa"/><rect x="0" y="0" width="5" height="2" fill="#3a78c6"/><g fill="#5a8ed0"><rect x="0" y="3.2" width="14" height="0.8"/><rect x="0" y="6.2" width="14" height="0.8"/><rect x="0" y="9.2" width="14" height="0.8"/><rect x="4.5" y="0" width="0.8" height="11"/><rect x="9.5" y="0" width="0.8" height="11"/></g><path d="M5,3 L5,9 L6.6,7.6 L9,10.8 L10.6,9.6 L8.4,6.6 L10.4,5.8 Z" fill="#e01b1b"/></g></svg>
<div class="a" style="left:854px;top:291px;width:1px;height:109px;background:#fafafa"></div>
<div class="a" style="left:855px;top:308px;width:14px;height:54px;background:#cdcdcd"></div>
<svg style="left:0;top:0" width="928" height="614"><path d="M858,302.5 L861.7,298.8 L865.4,302.5 M858,391.3 L861.7,395 L865.4,391.3" fill="none" stroke="#555" stroke-width="1.5"/></svg>
<div class="t" style="left:653px;top:412.14px;font-size:10.5px;color:#111">=</div>
<div class="t" style="left:669px;top:412.14px;font-size:10.5px;color:#111">0,242845443</div>
<div class="t" style="left:333.6px;top:427.97px;font-size:11.47px;color:#111">Возвращает доходность ценных бумаг, по которым выплачивается периодический процент.</div>
<div class="t" style="right:402px;top:451.82px;font-size:10.74px;font-weight:bold;-webkit-text-stroke:0.05px currentColor;color:#111">Погашение</div>
<div class="t" style="left:535.7px;top:451.57px;font-size:11.26px;color:#111">выкупная стоимость ценных бумаг за 100 рублей номинальной</div>
<div class="t" style="left:535.7px;top:464.77px;font-size:11.26px;color:#111">стоимости.</div>
<div class="a" style="left:332.7px;top:497.6px;width:546.5px;height:1px;background:#dcdcdc"></div>
<div class="t" style="left:333.2px;top:512.6px;font-size:11.2px;color:#111">Значение:</div>
<div class="t" style="left:395.5px;top:512.82px;font-size:10.75px;color:#111">0,242845443</div>
<div class="t" style="left:333.6px;top:541.07px;font-size:11.48px;color:#1c6fd0;text-decoration:underline">Справка по этой функции</div>
<div class="a" style="left:723.7px;top:534.3px;width:72px;height:21.3px;background:linear-gradient(#f3f3f3,#e6e6e6);border:1px solid #3c8fe6"></div>
<div class="t" style="left:723.7px;width:72px;text-align:center;top:540.26px;font-size:11.5px;color:#111;-webkit-text-stroke:0.15px #111">OK</div>
<div class="a" style="left:806px;top:534.3px;width:72px;height:21.3px;background:linear-gradient(#f3f3f3,#e6e6e6);border:1px solid #adadad"></div>
<div class="t" style="left:806px;width:72px;text-align:center;top:540.26px;font-size:11.5px;color:#111;-webkit-text-stroke:0.15px #111">Отмена</div>
</body></html>
